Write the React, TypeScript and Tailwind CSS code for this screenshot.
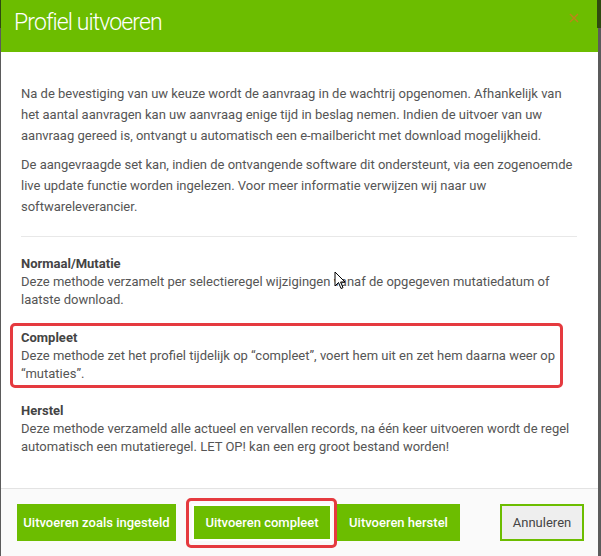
import React from "react";

export default function App() {
  return (
    <div className="w-[601px] h-[556px] bg-[#5b5b5b] relative overflow-hidden" style={{ fontFamily: "Roboto, 'Liberation Sans', sans-serif" }}>
      <div className="absolute left-0 top-0 w-[1px] h-[28px] bg-[#2f4a10]" />
      <div className="absolute right-0 top-0 w-[4px] h-[28px] bg-[#2f4a10]" />
      <div className="ml-[1px] w-[597px] h-[556px] bg-white flex flex-col">
        <div className="h-[52px] bg-[#6cbd00] flex items-start justify-between pl-[13px] pr-[19px] shrink-0">
          <span className="text-white text-[23px] font-light tracking-[-0.9px] leading-[26px] pt-[10px]">Profiel uitvoeren</span>
          <svg width="10" height="10" viewBox="0 0 10 10" className="mt-[13px]">
            <path d="M1 1L9 9M9 1L1 9" stroke="#c0841a" strokeWidth="1.4" />
          </svg>
        </div>
        <div className="flex-1 px-[20px] pt-[31px] text-[13px] text-[#555] relative">
          <p className="leading-[21px] mb-[8px]">
            Na de bevestiging van uw keuze wordt de aanvraag in de wachtrij opgenomen. Afhankelijk van het aantal aanvragen kan uw aanvraag enige tijd in beslag nemen. Indien de uitvoer van uw aanvraag gereed is, ontvangt u automatisch een e-mailbericht met download mogelijkheid.
          </p>
          <p className="leading-[21px]">
            De aangevraagde set kan, indien de ontvangende software dit ondersteunt, via een zogenoemde live update functie worden ingelezen. Voor meer informatie verwijzen wij naar uw softwareleverancier.
          </p>
          <div className="h-[1px] bg-[#e8e8e8] mt-[19px] mb-[18px] mr-[1px]" />
          <div className="leading-[18px] mb-[20px]">
            <div className="font-bold text-[#444]">Normaal/Mutatie</div>
            <div>Deze methode verzamelt per selectieregel wijzigingen vanaf de opgegeven mutatiedatum of laatste download.</div>
          </div>
          <div className="leading-[18px] mb-[19px]">
            <div className="font-bold text-[#444]">Compleet</div>
            <div>Deze methode zet het profiel tijdelijk op “compleet”, voert hem uit en zet hem daarna weer op “mutaties”.</div>
          </div>
          <div className="leading-[18px]">
            <div className="font-bold text-[#444]">Herstel</div>
            <div>Deze methode verzameld alle actueel en vervallen records, na één keer uitvoeren wordt de regel automatisch een mutatieregel. LET OP! kan een erg groot bestand worden!</div>
          </div>
          <div className="absolute left-[9px] top-[271px] w-[553px] h-[65px] border-[3px] border-[#e53a3f] rounded-[5px]" />
          <svg className="absolute left-[333px] top-[219px]" width="12" height="20" viewBox="0 0 12 20">
            <path d="M1 1 L1 15 L4.5 11.5 L7 17.5 L9 16.7 L6.6 11 L11 11 Z" fill="white" stroke="black" strokeWidth="1" strokeLinejoin="round" />
          </svg>
        </div>
        <div className="h-[68px] shrink-0 bg-[#fafafa] border-t border-[#e3e3e3] flex items-start pt-[15px] pl-[16px] pr-[14px] relative">
          <button className="h-[37px] w-[159px] bg-[#6cbd00] text-white text-[13px] font-medium">Uitvoeren zoals ingesteld</button>
          <button className="h-[37px] w-[140px] ml-[16px] bg-[#6cbd00] text-white text-[13px] font-medium border-2 border-white">Uitvoeren compleet</button>
          <button className="h-[37px] w-[123px] ml-[5px] bg-[#6cbd00] text-white text-[13px] font-medium">Uitvoeren herstel</button>
          <button className="h-[37px] w-[84px] ml-auto bg-[#eeeeee] text-[#444] text-[13px] border-2 border-[#6cbd00]">Annuleren</button>
          <div className="absolute left-[185px] top-[9px] w-[151px] h-[50px] border-[3px] border-[#e53a3f] rounded-[5px]" />
        </div>
      </div>
    </div>
  );
}
